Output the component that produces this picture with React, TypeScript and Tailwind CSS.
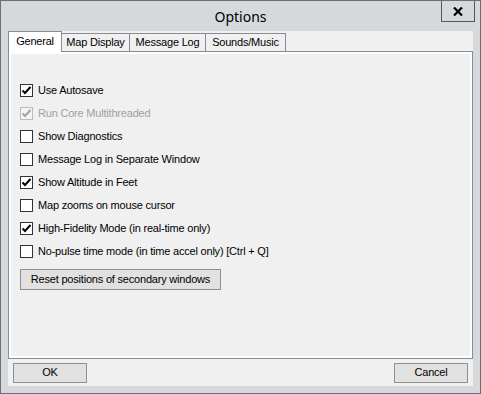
import React from "react";

const options = [
  { label: "Use Autosave", checked: true },
  { label: "Run Core Multithreaded", checked: true, disabled: true },
  { label: "Show Diagnostics", checked: false },
  { label: "Message Log in Separate Window", checked: false },
  { label: "Show Altitude in Feet", checked: true },
  { label: "Map zooms on mouse cursor", checked: false },
  { label: "High-Fidelity Mode (in real-time only)", checked: true },
  { label: "No-pulse time mode (in time accel only) [Ctrl + Q]", checked: false },
];

const tabs = [
  { label: "General", w: "w-[54px]" },
  { label: "Map Display", w: "w-[69px]" },
  { label: "Message Log", w: "w-[77px]" },
  { label: "Sounds/Music", w: "w-[81px]" },
];

function CheckBox({ checked, disabled }: { checked: boolean; disabled?: boolean }) {
  return (
    <div
      className={
        "flex h-[13px] w-[13px] shrink-0 items-center justify-center border " +
        (disabled ? "border-[#bcbcbc] bg-[#f4f4f4]" : "border-[#333333] bg-white")
      }
    >
      {checked && (
        <svg width="11" height="11" viewBox="0 0 11 11">
          <path
            d="M1.5 5.5 L4 8 L9.5 2"
            fill="none"
            stroke={disabled ? "#a3a3a3" : "#000000"}
            strokeWidth="2"
          />
        </svg>
      )}
    </div>
  );
}

function WinButton({ children, className }: { children: React.ReactNode; className: string }) {
  return (
    <div
      className={
        "flex items-center justify-center border border-[#8f8f8f] bg-[#e1e1e1] text-[11px] tracking-[-0.2px] text-black " +
        className
      }
    >
      {children}
    </div>
  );
}

export default function App() {
  return (
    <div className="flex h-[394px] w-[481px] flex-col border border-[#6b6f74] bg-[#d6d9dc] font-['Liberation_Sans',Arial,sans-serif]">
      {/* title bar */}
      <div className="relative flex h-[30px] shrink-0 items-center justify-center">
        <span className="font-['Noto_Sans',sans-serif] text-[14px] text-black">Options</span>
        <div className="absolute right-[5px] top-0 flex h-[21px] w-[34px] items-center justify-center border-x border-b border-[#54585d]">
          <svg width="10" height="9" viewBox="0 0 10 9">
            <path d="M1 0.5 L9 8.5 M9 0.5 L1 8.5" stroke="#000" strokeWidth="2.2" />
          </svg>
        </div>
      </div>

      {/* client area */}
      <div className="mx-[7px] mb-[7px] flex flex-1 flex-col bg-[#f0f0f0]">
        <div className="flex h-[20px] items-end">
          {tabs.map((t, i) => (
            <div
              key={t.label}
              className={
                "flex items-center justify-center border-x border-t border-[#898c95] text-[11px] tracking-[-0.2px] text-black " +
                t.w +
                (i === 0
                  ? " relative z-10 mb-[-1px] h-[21px] bg-white pb-[2px]"
                  : " -ml-px h-[18px] bg-[#f0f0f0]")
              }
            >
              {t.label}
            </div>
          ))}
        </div>

        {/* tab page */}
        <div className="flex h-[308px] flex-col border border-[#898c95] bg-white p-[2px]">
          <div className="flex flex-1 flex-col bg-[#f0f0f0] pl-[9px] pt-[25px]">
            {options.map((o) => (
              <div key={o.label} className="flex h-[23px] items-center gap-[5px]">
                <CheckBox checked={o.checked} disabled={o.disabled} />
                <span
                  className={
                    "text-[11px] tracking-[-0.2px] " + (o.disabled ? "text-[#a0a0a0]" : "text-black")
                  }
                >
                  {o.label}
                </span>
              </div>
            ))}
            <WinButton className="mt-[6px] h-[21px] w-[201px]">Reset positions of secondary windows</WinButton>
          </div>
        </div>

        <div className="flex flex-1 items-center justify-between px-[5px]">
          <WinButton className="h-[20px] w-[74px]">OK</WinButton>
          <WinButton className="h-[20px] w-[74px]">Cancel</WinButton>
        </div>
      </div>
    </div>
  );
}
